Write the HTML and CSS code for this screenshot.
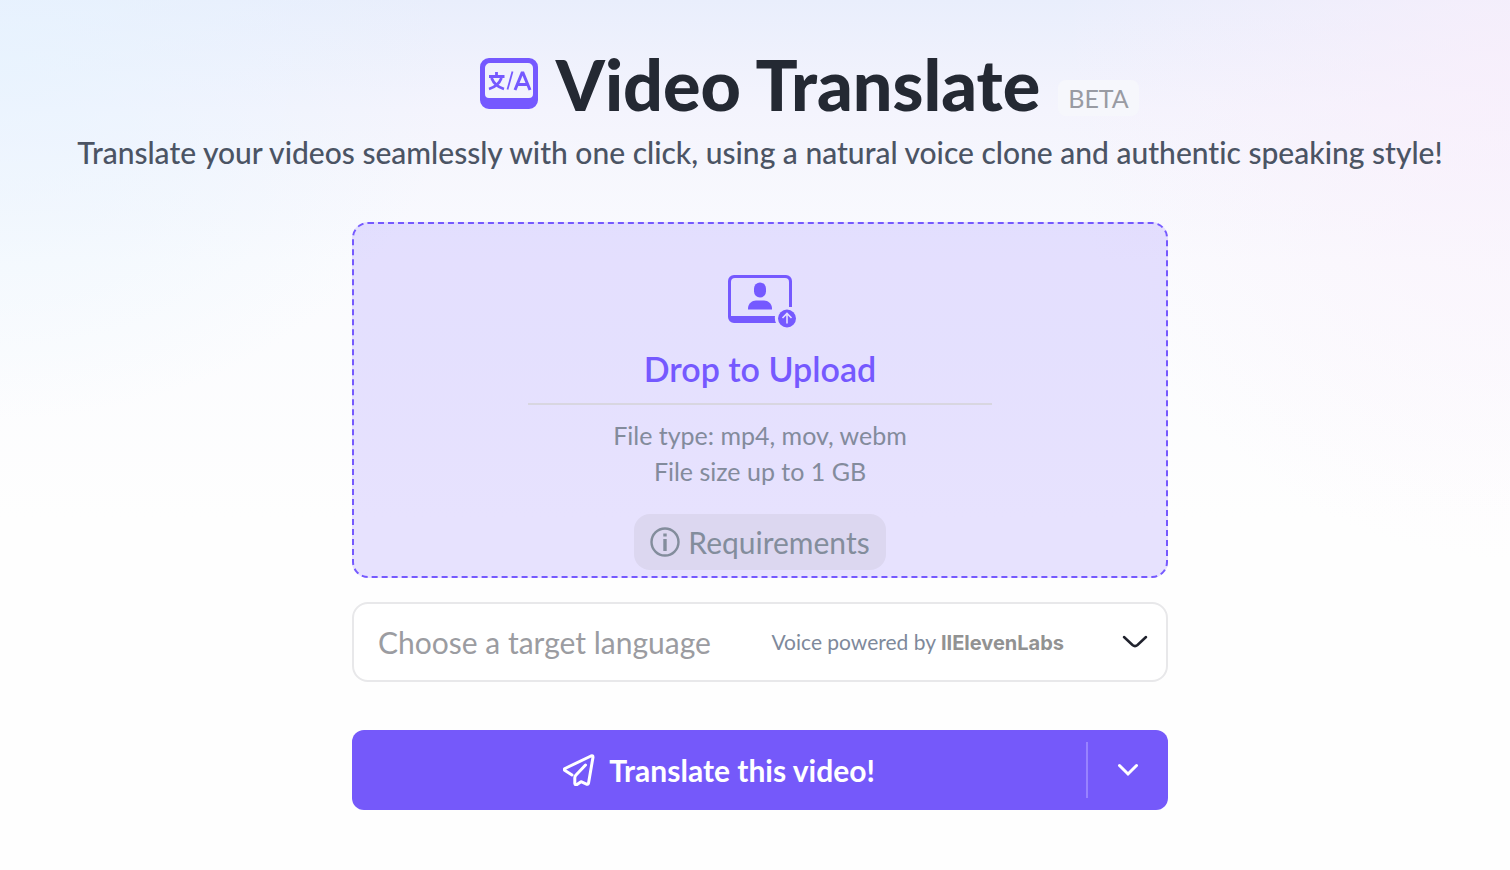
FILE: index.html
```html
<!DOCTYPE html>
<html lang="en">
<head>
    <meta charset="UTF-8">
    <meta name="viewport" content="width=device-width, initial-scale=1.0">
    <title>Video Translate</title>
    <link rel="stylesheet" href="styles.css">
</head>
<body>
    <header class="page-header">
        <div class="title-row">
            <svg class="title-icon" viewBox="0 0 58 52" aria-hidden="true">
                <path fill="#7559ff" fill-rule="evenodd" d="M9 0h40a9 9 0 0 1 9 9v33a9 9 0 0 1-9 9H9a9 9 0 0 1-9-9V9a9 9 0 0 1 9-9zM10 5a5 5 0 0 0-5 5v26a4 4 0 0 0 4 4h40a4 4 0 0 0 4-4V10a5 5 0 0 0-5-5z"/>
                <g fill="none" stroke="#7559ff" stroke-width="2.8">
                    <path d="M16.500 14v4M9 18.500h15.500M11.500 20c2 5 6 9 12.500 11M21.500 20c-2 5-6 9-12.500 11"/>
                    <path stroke-width="1.800" d="M32.500 13.500l-5 18"/>
                    <path stroke-width="3" d="M35 32l7-17h1l7 17M37.500 26.500h10"/>
                </g>
            </svg>
            <h1>Video Translate</h1>
            <span class="beta">BETA</span>
        </div>
        <p class="subtitle">Translate your videos seamlessly with one click, using a natural voice clone and authentic speaking style!</p>
    </header>

    <main class="translate-form">
        <section class="dropzone">
            <label class="upload" for="video">
                <svg class="upload-icon" viewBox="0 0 70 54" aria-hidden="true">
                    <path fill="#7559ff" d="M6 0h52a6 6 0 0 1 6 6v26h-3V7a4 4 0 0 0-4-4H7a4 4 0 0 0-4 4v34h44a12 12 0 0 0 1 7H6a6 6 0 0 1-6-6V6a6 6 0 0 1 6-6z"/>
                    <rect fill="#7559ff" x="26" y="7.500" width="12" height="15" rx="6"/>
                    <path fill="#7559ff" d="M20 34.500v-1c0-5 4-8 8-8h8c4 0 8 3 8 8v1z"/>
                    <circle fill="#7559ff" cx="59" cy="43.500" r="9"/>
                    <path fill="none" stroke="#e5dfff" stroke-width="1.600" d="M59 48.500v-9.500M54.500 43l4.500-4.500 4.500 4.500"/>
                </svg>
                <span class="upload-title">Drop to Upload</span>
            </label>
            <input class="file-input" type="file" id="video" name="video" accept=".mp4,.mov,.webm">
            <p class="file-info">File type: mp4, mov, webm<br>File size up to 1 GB</p>
            <button class="requirements" type="button">
                <svg class="info-icon" viewBox="0 0 30 30" aria-hidden="true">
                    <circle cx="15" cy="15" r="13.500" fill="none" stroke="currentColor" stroke-width="2.400"/>
                    <path fill="currentColor" d="M13.300 6.500h3.400v3h-3.400zM13.300 12h3.400v12h-3.400z"/>
                </svg>
                Requirements
            </button>
        </section>

        <div class="language">
            <select class="language-select" name="language" aria-label="Target language">
                <option value="">Choose a target language</option>
                <option value="en">English</option>
                <option value="es">Spanish</option>
                <option value="fr">French</option>
            </select>
            <span class="powered">Voice powered by <b>IIElevenLabs</b></span>
            <svg class="language-arrow" viewBox="0 0 26 14" aria-hidden="true">
                <path d="M2 2l8.500 8q2.500 2.200 5 0L24 2"/>
            </svg>
        </div>

        <div class="actions">
            <button class="translate" type="submit">
                <svg class="send-icon" viewBox="0 0 32 32" aria-hidden="true">
                    <path d="M9 21l-7-4.500q-1.500-1 0-2L28 2q2-.8 2 1.200l-4.500 26q-.4 1.500-2 1l-5.500-2.500-4 2.800q-2 .8-2.200-1.200V24q0-1.500 1-2.700L22.500 11"/>
                </svg>
                Translate this video!
            </button>
            <button class="more" type="button" aria-label="More options">
                <svg class="more-arrow" viewBox="0 0 20 14" aria-hidden="true">
                    <path d="M1.500 2.500l8.500 8.500 8.500-8.500"/>
                </svg>
            </button>
        </div>
    </main>
</body>
</html>
```
FILE: styles.css
```css
* {
    box-sizing: border-box;
}

body {
    font-family: Lato, "Open Sans", sans-serif;
    font-variant-ligatures: none;
    background:
        radial-gradient(ellipse 30% 360px at 0 60px, rgba(230, 244, 255, 0.7), rgba(230, 244, 255, 0)),
        radial-gradient(ellipse 30% 500px at 100% 60px, rgba(250, 238, 251, 0.7), rgba(250, 238, 251, 0)),
        linear-gradient(#e9eefc, #f4f4fd 110px, #fafbfe 260px, #fefefe 520px) #fefefe;
    background-repeat: no-repeat;
    min-height: 100vh;
    margin: 0;
    padding: 40px 0 60px 10px;
}

h1, p {
    margin: 0;
}

button, select {
    font-family: inherit;
    cursor: pointer;
}

.page-header {
    display: flex;
    flex-direction: column;
    align-items: center;
    text-align: center;
}

.title-row {
    position: relative;
    display: flex;
    align-items: center;
    gap: 18px;
}

.title-icon {
    width: 58px;
    height: 52px;
}

h1 {
    color: #242933;
    font-size: 70px;
    font-weight: 900;
    line-height: 88px;
}

.beta {
    position: absolute;
    left: 100%;
    bottom: 12px;
    margin-left: 18px;
    padding: 0 10px;
    border-radius: 8px;
    background: #f6f7fc;
    color: #999ba3;
    font-size: 25px;
    line-height: 36px;
}

.subtitle {
    color: #4b5464;
    font-size: 30px;
    font-weight: 500;
    line-height: 48px;
}

.translate-form {
    display: flex;
    flex-direction: column;
    max-width: 816px;
    margin: 46px auto 0;
}

.dropzone {
    display: flex;
    flex-direction: column;
    align-items: center;
    padding: 51px 20px 6px;
    border: 2px dashed #7559ff;
    border-radius: 16px;
    background: rgba(117, 89, 255, 0.17);
}

.upload {
    display: flex;
    flex-direction: column;
    align-items: center;
    width: 60%;
    border-bottom: 2px solid #d8d6e0;
    cursor: pointer;
}

.upload-icon {
    width: 70px;
    height: 54px;
    margin-left: 6px;
}

.upload-title {
    margin-top: 17px;
    padding-bottom: 11px;
    color: #7559ff;
    font-size: 34px;
    font-weight: 600;
    line-height: 46px;
}

.file-input {
    display: none;
}

.file-info {
    margin-top: 12px;
    color: #838b9c;
    font-size: 25px;
    line-height: 36px;
    text-align: center;
}

.requirements {
    display: flex;
    align-items: center;
    gap: 8px;
    height: 56px;
    margin-top: 25px;
    padding: 0 16px;
    border: none;
    border-radius: 16px;
    background: #dcd7f0;
    color: #838d9c;
    font-size: 30px;
}

.info-icon {
    width: 30px;
    height: 30px;
}

.language {
    display: flex;
    align-items: center;
    height: 80px;
    margin-top: 24px;
    padding: 0 18px 0 24px;
    border: 2px solid #e8e8ea;
    border-radius: 16px;
    background: #fff;
}

.language-select {
    flex: 1;
    min-width: 0;
    height: 100%;
    padding: 0;
    appearance: none;
    border: none;
    background: none;
    color: #9b9ca1;
    font-size: 30px;
}

.powered {
    color: #7e899b;
    font-size: 21px;
    white-space: nowrap;
}

.powered b {
    color: #929292;
    font-family: Inter, "Liberation Sans", sans-serif;
    font-size: 20px;
    font-weight: 700;
}

.language-arrow {
    width: 26px;
    height: 14px;
    margin-left: 58px;
    fill: none;
    stroke: #20222d;
    stroke-width: 2.5;
    stroke-linecap: round;
}

.actions {
    display: flex;
    align-items: center;
    height: 80px;
    margin-top: 48px;
    border-radius: 12px;
    background: #7559fa;
}

.translate, .more {
    display: flex;
    align-items: center;
    justify-content: center;
    border: none;
    background: none;
    color: #fff;
}

.translate {
    flex: 1;
    gap: 14px;
    height: 100%;
    font-size: 30px;
    font-weight: 700;
}

.send-icon {
    width: 32px;
    height: 32px;
    fill: none;
    stroke: currentColor;
    stroke-width: 3;
    stroke-linecap: round;
    stroke-linejoin: round;
}

.more {
    width: 82px;
    height: 56px;
    border-left: 2px solid #9882ff;
}

.more-arrow {
    width: 20px;
    height: 14px;
    fill: none;
    stroke: currentColor;
    stroke-width: 3;
    stroke-linecap: round;
}
```
